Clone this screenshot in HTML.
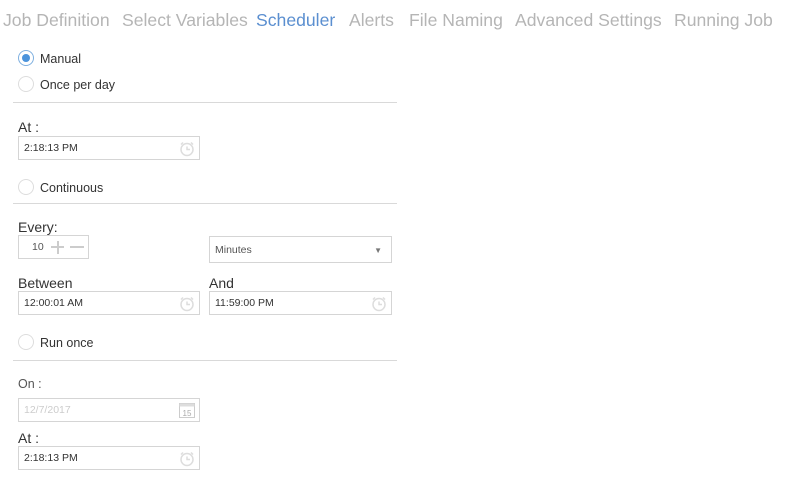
<!DOCTYPE html>
<html><head><style>
body{margin:0;width:811px;height:489px;background:#fff;font-family:"Liberation Sans",sans-serif;position:relative;overflow:hidden;color:#333}
.a{position:absolute;white-space:nowrap}
.tab{font-size:17.6px;color:#b5b5b5;top:10px}
.rad{position:absolute;width:14px;height:14px;border:1px solid #ddd;border-radius:50%;left:18px}
.rl{font-size:12.5px;color:#333;left:40px}
.hr{position:absolute;left:13px;width:384px;height:1px;background:#d9d9d9}
.lbl{font-size:14px;color:#333;left:18px}
.inp{position:absolute;border:1px solid #d5d5d5;font-size:10.5px;color:#333;line-height:22px;padding-left:5px;box-sizing:border-box;height:24px}
.ic{position:absolute;right:3px;top:3px}
</style></head><body>
<div class="a tab" style="left:3px">Job Definition</div>
<div class="a tab" style="left:122px">Select Variables</div>
<div class="a tab" style="left:256px;color:#5b8fd0">Scheduler</div>
<div class="a tab" style="left:349px">Alerts</div>
<div class="a tab" style="left:409px">File Naming</div>
<div class="a tab" style="left:515px">Advanced Settings</div>
<div class="a tab" style="left:674px">Running Job</div>

<div class="rad" style="top:50px;border-color:#7fb0e0"><div style="position:absolute;left:3px;top:3px;width:8px;height:8px;border-radius:50%;background:#4a93dc"></div></div>
<div class="a rl" style="top:52px">Manual</div>
<div class="rad" style="top:76px"></div>
<div class="a rl" style="top:78px">Once per day</div>
<div class="hr" style="top:102px"></div>
<div class="a lbl" style="top:119px">At :</div>
<div class="inp" style="left:18px;top:136px;width:182px">2:18:13 PM<svg class="ic" width="18" height="17" viewBox="0 0 18 17"><circle cx="9" cy="9.5" r="6" fill="none" stroke="#ddd" stroke-width="1.5"/><path d="M9 6.5V9.5H12M3 4.5L5 2.5M15 4.5L13 2.5" fill="none" stroke="#ddd" stroke-width="1.5"/></svg></div>
<div class="rad" style="top:179px"></div>
<div class="a rl" style="top:181px">Continuous</div>
<div class="hr" style="top:203px"></div>
<div class="a lbl" style="top:219px">Every:</div>
<div class="inp" style="left:18px;top:235px;width:71px;padding-left:13px;color:#555">10<span style="position:absolute;left:32px;top:10px;width:13px;height:2px;background:#ccc"></span><span style="position:absolute;left:37.5px;top:4.5px;width:2px;height:13px;background:#ccc"></span><span style="position:absolute;left:51px;top:10px;width:14px;height:2px;background:#ccc"></span></div>
<div class="inp" style="left:209px;top:236px;width:183px;height:27px;line-height:27px;color:#555">Minutes<span style="position:absolute;right:9px;top:0;font-size:8px;color:#777">▼</span></div>
<div class="a lbl" style="top:275px">Between</div>
<div class="a lbl" style="top:275px;left:209px">And</div>
<div class="inp" style="left:18px;top:291px;width:182px">12:00:01 AM<svg class="ic" width="18" height="17" viewBox="0 0 18 17"><circle cx="9" cy="9.5" r="6" fill="none" stroke="#ddd" stroke-width="1.5"/><path d="M9 6.5V9.5H12M3 4.5L5 2.5M15 4.5L13 2.5" fill="none" stroke="#ddd" stroke-width="1.5"/></svg></div>
<div class="inp" style="left:209px;top:291px;width:183px">11:59:00 PM<svg class="ic" width="18" height="17" viewBox="0 0 18 17"><circle cx="9" cy="9.5" r="6" fill="none" stroke="#ddd" stroke-width="1.5"/><path d="M9 6.5V9.5H12M3 4.5L5 2.5M15 4.5L13 2.5" fill="none" stroke="#ddd" stroke-width="1.5"/></svg></div>
<div class="rad" style="top:334px"></div>
<div class="a rl" style="top:336px">Run once</div>
<div class="hr" style="top:360px"></div>
<div class="a lbl" style="top:377px;font-size:12.5px;color:#555">On :</div>
<div class="inp" style="left:18px;top:398px;width:182px;color:#ccc">12/7/2017<svg class="ic" width="18" height="18" viewBox="0 0 18 18" style="top:2px"><rect x="1.5" y="2.5" width="15" height="14" fill="none" stroke="#ccc"/><rect x="1.5" y="2.5" width="15" height="3" fill="#ddd"/><text x="9" y="15" font-size="8" text-anchor="middle" fill="#aaa" font-family="Liberation Sans">15</text></svg></div>
<div class="a lbl" style="top:430px">At :</div>
<div class="inp" style="left:18px;top:446px;width:182px">2:18:13 PM<svg class="ic" width="18" height="17" viewBox="0 0 18 17"><circle cx="9" cy="9.5" r="6" fill="none" stroke="#ddd" stroke-width="1.5"/><path d="M9 6.5V9.5H12M3 4.5L5 2.5M15 4.5L13 2.5" fill="none" stroke="#ddd" stroke-width="1.5"/></svg></div>
</body></html>
